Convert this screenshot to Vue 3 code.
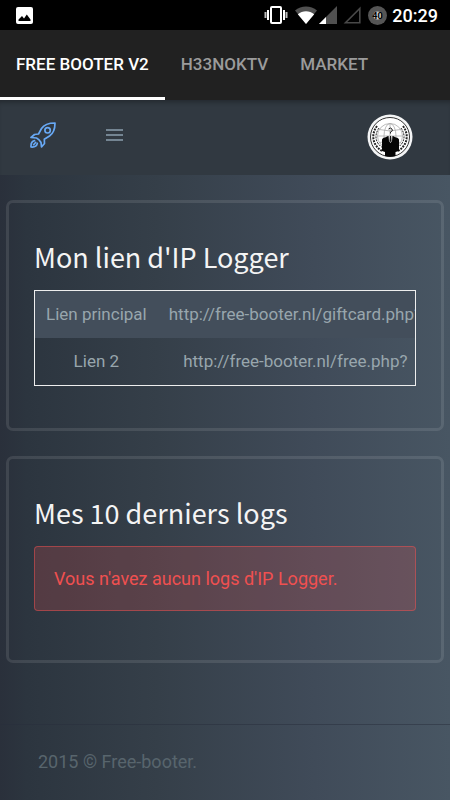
<template>
  <div class="app">
    <div class="status-bar">
      <svg class="status-photo" viewBox="0 0 17 17" width="17" height="17" aria-hidden="true">
        <rect width="17" height="17" rx="2" fill="#fff" />
        <path d="M2.500 14v-1.500L6 9l2 2.500 2.800-4 3.700 5V14z" fill="#000" />
      </svg>
      <div class="status-icons">
        <svg viewBox="0 0 24 18" width="24" height="18" aria-hidden="true">
          <rect x="7" y="1" width="10" height="16" rx="1" fill="none" stroke="#fff" stroke-width="2" />
          <path d="M4 4v10M20 4v10" stroke="#fff" stroke-width="2" />
          <path d="M1.500 6v6M22.500 6v6" stroke="#bbb" stroke-width="2" />
        </svg>
        <svg class="wifi" viewBox="0 0 22 18" width="22" height="18" aria-hidden="true">
          <path d="M0 4.500C6-.8 16-.8 22 4.500L11 18z" fill="#505050" />
          <path d="M2.800 8.200C7.500 4.300 14.500 4.300 19.200 8.200L11 18z" fill="#fff" />
        </svg>
        <svg class="signal" viewBox="0 0 18 18" width="18" height="18" aria-hidden="true">
          <path d="M18 0v18H0z" fill="#505050" />
          <path d="M7 11v7H0z" fill="#fff" />
        </svg>
        <svg class="signal-empty" viewBox="0 0 18 18" width="18" height="18" aria-hidden="true">
          <path d="M16.800 2.500v14.300H2.500z" fill="none" stroke="#484848" stroke-width="1.600" />
        </svg>
        <svg class="battery" viewBox="0 0 19 19" width="19" height="19" aria-hidden="true">
          <circle cx="9.500" cy="9.500" r="9.500" fill="#555" />
          <circle cx="9.500" cy="9.500" r="4" fill="#ccc" />
          <text x="9.500" y="12.500" text-anchor="middle" font-size="9" font-weight="700">40</text>
        </svg>
        <span class="clock">20:29</span>
      </div>
    </div>

    <nav class="tabs">
      <button
        v-for="tab in tabs"
        :key="tab"
        type="button"
        class="tab"
        :class="{ active: tab === activeTab }"
        @click="activeTab = tab"
      >
        {{ tab }}
      </button>
    </nav>

    <header class="topbar">
      <a class="logo" href="#" aria-label="Accueil">
        <svg viewBox="0 0 26 26" width="26" height="26" fill="none" stroke="#68a9f5" stroke-width="1.700" stroke-linejoin="round" stroke-linecap="round">
          <path d="M25 1c-6 0-10.500 1-13.500 5.500L8.500 12 4.500 12.500 1 15.500l5.500.5c2 1 3.500 2.500 4.500 4.500l.5 4.500 3-3.500-.2-4.300 5.200-3.200C24 11 25 7 25 1z" />
          <circle cx="17.600" cy="8.300" r="2.700" />
          <path d="M4.500 18.700C1.800 19.200.8 21.500 1 25c3.300.3 5.800-.8 6.300-3.600M5.600 20.500l-2 2.200" />
        </svg>
      </a>
      <button type="button" class="menu" aria-label="Menu">
        <span></span>
        <span></span>
        <span></span>
      </button>
      <button type="button" class="avatar" aria-label="Profil">
        <svg viewBox="0 0 46 46" width="46" height="46">
          <circle cx="23" cy="23" r="22.500" fill="#f4f5f6" />
          <circle cx="23" cy="23" r="19.500" fill="#fff" stroke="#333" stroke-width="1" />
          <g fill="none" stroke="#aaa" stroke-width="0.800">
            <circle cx="23" cy="22" r="12.500" />
            <ellipse cx="23" cy="22" rx="6" ry="12.500" />
            <path d="M10.500 22h25M23 9.500v25M12.500 15.500q10.500 3 21 0M12.500 28.500q10.500-3 21 0" />
          </g>
          <g fill="none" stroke="#222" stroke-width="2" stroke-dasharray="2 1">
            <path d="M10 12C4 20 5 31 15 37M36 12c6 8 5 19-5 25" />
            <path d="M12 14C7 21 8 29 16 34M34 14c5 7 4 15-4 20" stroke-width="1" />
          </g>
          <path d="M15 37V26q0-2 3-2.500l3-1.500h5l3 1.500q3 .5 3 2.500v11l-3.500 1v4q-5.500 1.500-10.500 0v-4z" fill="#050505" />
          <path d="M21.500 22h4l-.5 5-1.500 2-1.500-2z" fill="#ddd" />
          <path d="M23 22h1l.5 5-1 1-1-1z" fill="#111" />
          <path d="M21.500 15q2-2 3.500 0t-1.500 3v1.500" fill="none" stroke="#222" />
        </svg>
      </button>
    </header>

    <main class="content">
      <section class="card">
        <h2>Mon lien d'IP Logger</h2>
        <div class="table-wrap">
          <table>
            <tbody>
              <tr v-for="link in links" :key="link.label">
                <th scope="row">{{ link.label }}</th>
                <td>{{ link.url }}</td>
              </tr>
            </tbody>
          </table>
        </div>
      </section>

      <section class="card">
        <h2>Mes 10 derniers logs</h2>
        <div class="alert" role="alert">Vous n'avez aucun logs d'IP Logger.</div>
      </section>
    </main>

    <footer class="footer">2015 © Free-booter.</footer>
  </div>
</template>

<script setup>
import { ref } from 'vue';

const tabs = ['FREE BOOTER V2', 'H33NOKTV', 'MARKET'];
const activeTab = ref(tabs[0]);

const links = [
  { label: 'Lien principal', url: 'http://free-booter.nl/giftcard.php?' },
  { label: 'Lien 2', url: 'http://free-booter.nl/free.php?' },
];
</script>

<style>
body {
  margin: 0;
  background: #2b303b;
}
</style>

<style scoped>
.app {
  display: flex;
  flex-direction: column;
  min-height: 100vh;
  background: linear-gradient(90deg, #2a303b 0%, #2c353f 6%, #353f49 35%, #404b59 70%, #485663 100%);
  color: #98a6ad;
  font-family: Roboto, sans-serif;
  font-size: 18px;
}

button {
  padding: 0;
  border: 0;
  background: none;
  font-family: inherit;
  cursor: pointer;
}

svg {
  display: block;
}

/* Android status bar */
.status-bar {
  display: flex;
  align-items: center;
  justify-content: space-between;
  height: 30px;
  padding: 0 12px 0 16px;
  background: #000;
}

.status-icons {
  display: flex;
  align-items: center;
}

.wifi {
  margin-left: 7px;
}

.signal {
  margin-left: 2px;
}

.signal-empty {
  margin-left: 6px;
}

.battery {
  margin-left: 7px;
}

.clock {
  margin-left: 5px;
  color: #fff;
  font-weight: 500;
}

/* Tabs */
.tabs {
  display: flex;
  height: 70px;
  background: #212121;
}

.tab {
  padding: 1px 16px 0;
  border-bottom: 3px solid transparent;
  color: #9b9b9b;
  font-size: 17px;
  font-weight: 500;
  white-space: nowrap;
}

.tab.active {
  border-bottom-color: #fff;
  color: #fff;
}

/* Site header */
.topbar {
  display: flex;
  align-items: center;
  box-sizing: border-box;
  height: 75px;
  padding: 0 37px 2px 30px;
  background: #313941;
  box-shadow: inset 0 5px 5px -3px rgba(0, 0, 0, 0.3);
}

.logo {
  margin-bottom: 4px;
}

.menu {
  display: flex;
  flex-direction: column;
  gap: 3px;
  width: 17px;
  margin: 0 0 4px 50px;
}

.menu span {
  height: 2px;
  background: #748592;
}

.avatar {
  margin-left: auto;
}

/* Cards */
.content {
  display: flex;
  flex: 1;
  flex-direction: column;
  gap: 25px;
  padding: 25px 6px;
}

.card {
  padding: 36px 25px 42px;
  border: 3px solid rgba(255, 255, 255, 0.1);
  border-radius: 7px;
}

h2 {
  margin: 0 0 15px;
  color: #f4f4f4;
  font-family: "Noto Sans CJK JP", "Noto Sans", sans-serif;
  font-size: 27px;
  font-weight: 400;
  line-height: 36px;
}

.table-wrap {
  overflow: hidden;
  border: 1px solid #eee;
}

table {
  width: 100%;
  border-collapse: collapse;
  font-size: 17px;
  white-space: nowrap;
}

tr:nth-child(odd) {
  background: #434e5b;
}

th,
td {
  padding: 10px 11px;
  font-weight: 400;
  line-height: 27px;
  text-align: center;
}

.alert {
  margin-bottom: 7px;
  padding: 19px;
  border: 1px solid rgba(240, 80, 80, 0.5);
  border-radius: 4px;
  background: rgba(240, 80, 80, 0.2);
  color: #f05050;
  line-height: 25px;
}

.footer {
  padding: 24px 38px 26px;
  border-top: 1px solid rgba(40, 46, 60, 0.5);
  color: #58656d;
  line-height: 25px;
}
</style>
